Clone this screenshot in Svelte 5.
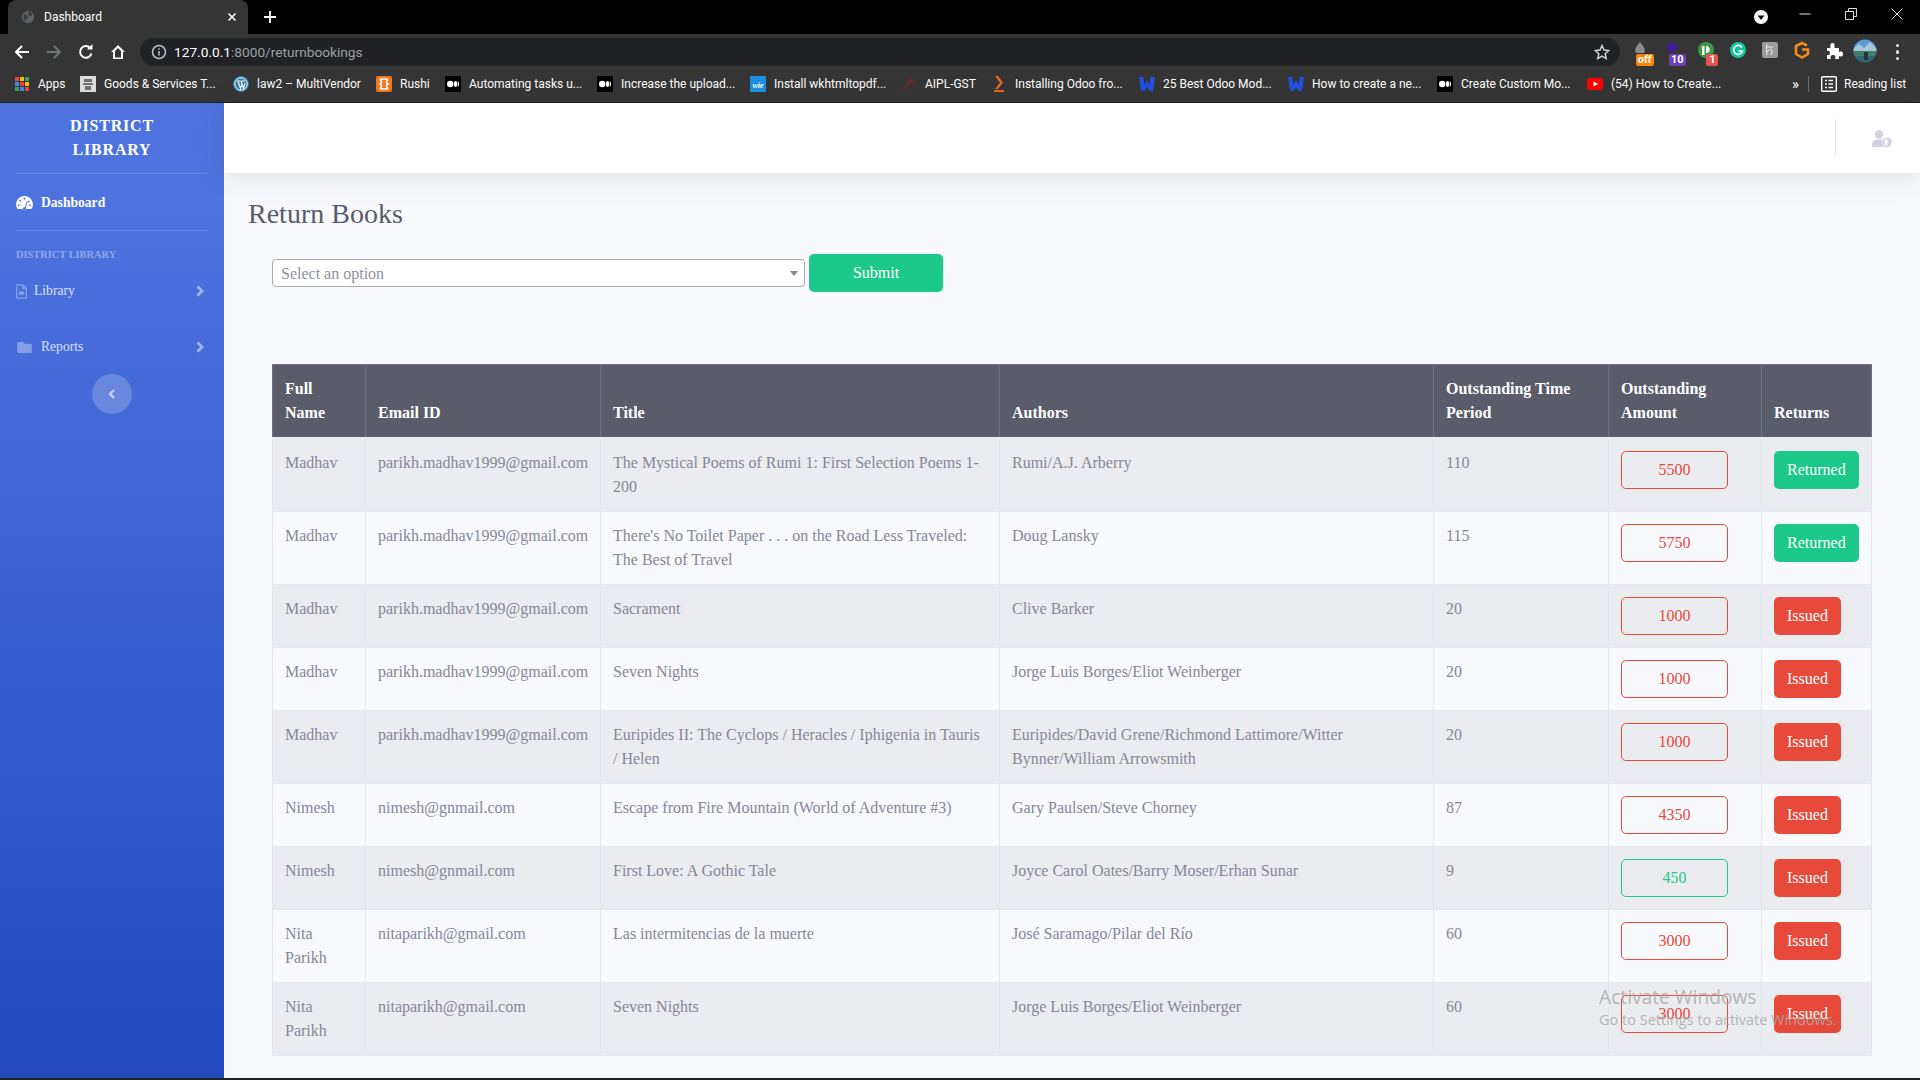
<script>
  const marks = [
    { k: 'apps', t: 'Apps', w: 65 },
    { k: 'gov', t: 'Goods & Services T...', w: 153 },
    { k: 'wp', t: 'law2 – MultiVendor', w: 143 },
    { k: 'xa', t: 'Rushi', w: 69 },
    { k: 'med', t: 'Automating tasks u...', w: 152 },
    { k: 'med', t: 'Increase the upload...', w: 153 },
    { k: 'wie', t: 'Install wkhtmltopdf...', w: 151 },
    { k: 'aipl', t: 'AIPL-GST', w: 90 },
    { k: 'odoo', t: 'Installing Odoo fro...', w: 148 },
    { k: 'w', t: '25 Best Odoo Mod...', w: 149 },
    { k: 'w', t: 'How to create a ne...', w: 149 },
    { k: 'med', t: 'Create Custom Mo...', w: 150 },
    { k: 'yt', t: '(54) How to Create...', w: 206 }
  ];
  const appsColors = ['#ea4335','#fbbc05','#34a853','#4285f4','#ea4335','#fbbc05','#34a853','#4285f4','#ea4335'];
  const m = 'parikh.madhav1999@gmail.com';
  const e2 = 'nimesh@gnmail.com';
  const e3 = 'nitaparikh@gmail.com';
  const rows = [
    ['Madhav', m, 'The Mystical Poems of Rumi 1: First Selection Poems 1-200', 'Rumi/A.J. Arberry', '110', '5500', 'Returned'],
    ['Madhav', m, "There's No Toilet Paper . . . on the Road Less Traveled: The Best of Travel", 'Doug Lansky', '115', '5750', 'Returned'],
    ['Madhav', m, 'Sacrament', 'Clive Barker', '20', '1000', 'Issued'],
    ['Madhav', m, 'Seven Nights', 'Jorge Luis Borges/Eliot Weinberger', '20', '1000', 'Issued'],
    ['Madhav', m, 'Euripides II: The Cyclops / Heracles / Iphigenia in Tauris / Helen', 'Euripides/David Grene/Richmond Lattimore/Witter Bynner/William Arrowsmith', '20', '1000', 'Issued'],
    ['Nimesh', e2, 'Escape from Fire Mountain (World of Adventure #3)', 'Gary Paulsen/Steve Chorney', '87', '4350', 'Issued'],
    ['Nimesh', e2, 'First Love: A Gothic Tale', 'Joyce Carol Oates/Barry Moser/Erhan Sunar', '9', '450', 'Issued', true],
    ['Nita Parikh', e3, 'Las intermitencias de la muerte', 'José Saramago/Pilar del Río', '60', '3000', 'Issued'],
    ['Nita Parikh', e3, 'Seven Nights', 'Jorge Luis Borges/Eliot Weinberger', '60', '3000', 'Issued']
  ];
  const heads = ['Full Name', 'Email ID', 'Title', 'Authors', 'Outstanding Time Period', 'Outstanding Amount', 'Returns'];
</script>

<div class="page">
  <div class="tabstrip">
    <div class="tab">
      <svg class="fav" viewBox="0 0 16 16"><circle cx="8" cy="8" r="7" fill="#5f6368"/><path d="M3 4l4 2 1 3-2 1-1 3-2-4zM9 2l3 1 1 3-3 1-2-2z" fill="#3a3b3d"/></svg>
      <span class="tabtitle">Dashboard</span>
      <svg class="tabx" viewBox="0 0 10 10"><path d="M1.500 1.500l7 7M8.500 1.500l-7 7" stroke="#fff" stroke-width="1.500"/></svg>
    </div>
    <svg class="plus" viewBox="0 0 12 12"><path d="M6 0v12M0 6h12" stroke="#fff" stroke-width="1.800"/></svg>
    <div class="winctl">
      <svg class="dl" viewBox="0 0 14 14"><circle cx="7" cy="7" r="7" fill="#fff"/><path d="M3.500 5.500h7L7 10z" fill="#111"/></svg>
      <svg class="ctl" viewBox="0 0 12 12"><path d="M0.500 6h11" stroke="#ddd" stroke-width="1"/></svg>
      <svg class="ctl" viewBox="0 0 12 12"><path d="M.5 3.500h8v8h-8zM3.500 3.500v-3h8v8h-3" fill="none" stroke="#ddd" stroke-width="1"/></svg>
      <svg class="ctl last" viewBox="0 0 12 12"><path d="M.5.5l11 11M11.500.5l-11 11" stroke="#ddd" stroke-width="1"/></svg>
    </div>
  </div>

  <div class="toolbar">
    <svg class="nav" viewBox="0 0 16 16"><path d="M15 8H2M8 2L2 8l6 6" fill="none" stroke="#fff" stroke-width="2"/></svg>
    <svg class="nav" viewBox="0 0 16 16"><path d="M1 8h13M8 2l6 6-6 6" fill="none" stroke="#74777a" stroke-width="2"/></svg>
    <svg class="nav" viewBox="0 0 16 16"><path d="M13.500 9.500A5.800 5.800 0 1 1 12.200 4" fill="none" stroke="#fff" stroke-width="2"/><path d="M9 5.500h5.500V0z" fill="#fff"/></svg>
    <svg class="nav" viewBox="0 0 16 16"><path d="M8 1L1 8h2v7h10V8h2zM5 13.500V7l3-3 3 3v6.500z" fill="#fff" fill-rule="evenodd"/></svg>
    <div class="omni">
      <svg class="info" viewBox="0 0 16 16"><circle cx="8" cy="8" r="6.500" fill="none" stroke="#bdc1c6" stroke-width="1.500"/><path d="M8 7v4.500M8 4.200v1.500" stroke="#bdc1c6" stroke-width="1.500"/></svg>
      <span class="url"><b>127.0.0.1</b>:8000/returnbookings</span>
      <svg class="star" viewBox="0 0 16 16"><path d="M8 1.500l2 4.500 4.800.5-3.600 3.200 1 4.800L8 12.100l-4.200 2.400 1-4.800L1.200 6.500 6 6z" fill="none" stroke="#d5d7da" stroke-width="1.400"/></svg>
    </div>
    <div class="exts">
      <div class="ext lead">
        <svg viewBox="0 0 20 20"><path d="M10 1c1 3 6 6 6 11 0 2-1 3-2 3H6c-1 0-2-1-2-3 0-5 5-8 6-11z" fill="#8a8c8f"/></svg>
        <span class="badge orange">off</span>
      </div>
      <div class="ext lead">
        <svg viewBox="0 0 20 20"><path d="M10 1l8 7-8 7-8-7z" fill="#3f1d9b"/></svg>
        <span class="badge purple">10</span>
      </div>
      <div class="ext">
        <svg viewBox="0 0 20 20"><circle cx="10" cy="9" r="8" fill="#3a9a45"/><path d="M6 5h2.500v9H6zM10 5c5 0 5 7 0 7z" fill="#fff"/></svg>
        <span class="badge red">1</span>
      </div>
      <div class="ext">
        <svg viewBox="0 0 20 20"><circle cx="10" cy="9" r="8" fill="#15c39a"/><path d="M14 6.500A4.500 4.500 0 1 0 14.500 10H10.500" fill="none" stroke="#fff" stroke-width="1.600"/></svg>
      </div>
      <div class="ext">
        <svg viewBox="0 0 20 20"><rect x="2" y="1" width="16" height="16" rx="2" fill="#9b9b9b"/><path d="M7 3c-1 4 0 8 0 11M7 11c2-4 6-3 5 0l-1 3M7 6h6" fill="none" stroke="#eee" stroke-width="1"/></svg>
      </div>
      <div class="ext">
        <svg viewBox="0 0 20 20"><path d="M15 4.500L10 2 4 5v8l6 3.500 6-3.500V8.500h-6" fill="none" stroke="#f58a1f" stroke-width="2.600"/></svg>
      </div>
      <div class="ext">
        <svg viewBox="0 0 20 20"><path d="M3 7h3.500C6 3 7 2 8.500 2S11 3 10.500 7H15v4c3-1 4 0 4 2s-1 3-4 2v3H11c1-3 0-4-2-4s-3 1-2 4H3v-4c2 .5 3-.5 3-2S5 9.500 3 10z" fill="#fff"/></svg>
      </div>
      <div class="ext">
        <svg class="avatar" viewBox="0 0 24 24"><defs><clipPath id="av"><circle cx="12" cy="12" r="11.500"/></clipPath></defs><g clip-path="url(#av)"><rect width="24" height="10" fill="#5b9bd5"/><path d="M0 10l6-5 5 4 6-6 7 7v4H0z" fill="#a9c6d6"/><rect y="12" width="24" height="5" fill="#3f7f6c"/><rect y="17" width="24" height="7" fill="#2f6670"/><rect x="11" y="13" width="4" height="8" fill="#26343c"/></g></svg>
      </div>
      <div class="ext dots"><i></i><i></i><i></i></div>
    </div>
  </div>

  <div class="bookmarks">
    {#each marks as b}
      <div class="mark" style="width:{b.w}px">
        {#if b.k === 'apps'}
          <span class="appsgrid">{#each appsColors as c}<i style="background:{c}"></i>{/each}</span>
        {:else if b.k === 'gov'}
          <svg class="bi" viewBox="0 0 16 16"><rect width="16" height="16" fill="#dcdcdc"/><path d="M4 3h8v3H4zM3 7h10v2H3zM5 10h6v4H5z" fill="#6f6f6f"/></svg>
        {:else if b.k === 'wp'}
          <svg class="bi" viewBox="0 0 16 16"><circle cx="8" cy="8" r="8" fill="#2f7fa8"/><circle cx="8" cy="8" r="6.200" fill="none" stroke="#fff" stroke-width="1"/><path d="M4 5h3.500M8.500 5H12M5 5l2.500 7.500L9 8M8 5l2.500 7.500L12 7" fill="none" stroke="#fff" stroke-width="1.100"/></svg>
        {:else if b.k === 'xa'}
          <svg class="bi" viewBox="0 0 16 16"><rect width="16" height="16" rx="2" fill="#f5761f"/><path d="M4 3c2 3 2 4 0 5 2 1 2 2 0 5M12 3c-2 3-2 4 0 5-2 1-2 2 0 5M4 3h8M4 13h8" fill="none" stroke="#fff" stroke-width="1.600"/></svg>
        {:else if b.k === 'med'}
          <svg class="bi" viewBox="0 0 16 16"><rect width="16" height="16" rx="1" fill="#000"/><circle cx="5.200" cy="8" r="3.200" fill="#fff"/><ellipse cx="10.600" cy="8" rx="1.600" ry="3" fill="#fff"/><ellipse cx="13.300" cy="8" rx=".6" ry="2.700" fill="#fff"/></svg>
        {:else if b.k === 'wie'}
          <svg class="bi" viewBox="0 0 16 16"><rect width="16" height="16" fill="#1d8fe0"/><text x="8" y="12" text-anchor="middle" class="wie">wie</text></svg>
        {:else if b.k === 'aipl'}
          <svg class="bi" viewBox="0 0 16 16"><path d="M1 16L10 1l5 8-5-3z" fill="#7a2626"/></svg>
        {:else if b.k === 'odoo'}
          <svg class="bi" viewBox="0 0 16 16"><path d="M4 0h3l5 6.500L7 13H4l5-6.500z" fill="#e8641b"/><rect x="3" y="14" width="10" height="2" fill="#e8641b"/></svg>
        {:else if b.k === 'w'}
          <svg class="bi" viewBox="0 0 16 16"><path d="M0 1h4.500l1 8L8 4l2.500 5 1-8H16l-2 14h-3.500L8 11l-2.500 4H2z" fill="#2450e0"/></svg>
        {:else if b.k === 'yt'}
          <svg class="bi" viewBox="0 0 16 16"><rect y="2" width="16" height="12" rx="3" fill="#f00"/><path d="M6.500 5.500L11 8l-4.500 2.500z" fill="#fff"/></svg>
        {/if}
        <span>{b.t}</span>
      </div>
    {/each}
    <span class="more">»</span>
    <span class="sep"></span>
    <svg class="readicon" viewBox="0 0 16 16"><rect x=".7" y=".7" width="14.600" height="14.600" rx="1" fill="none" stroke="#fff" stroke-width="1.400"/><path d="M4 4.500h2M7.500 4.500H12M4 8h2M7.500 8H12M4 11.500h2M7.500 11.500H12" stroke="#fff" stroke-width="1.400"/></svg>
    <span class="reading">Reading list</span>
  </div>

  <div class="shell">
    <aside class="side">
      <div class="brand">DISTRICT<br />LIBRARY</div>
      <hr />
      <div class="navrow active">
        <svg class="ic-dash" viewBox="0 0 576 512"><path fill="#fff" d="M288 32C129 32 0 161 0 320c0 53 14 102 39 145 6 10 17 15 28 15h442c11 0 22-5 28-15 25-43 39-92 39-145C576 161 447 32 288 32zm0 64c18 0 32 14 32 32s-14 32-32 32-32-14-32-32 14-32 32-32zM96 384c-18 0-32-14-32-32s14-32 32-32 32 14 32 32-14 32-32 32zm48-160c-18 0-32-14-32-32s14-32 32-32 32 14 32 32-14 32-32 32zm247 27l-61 185c14 12 22 30 22 48H224c0-40 37-70 76-63l61-185c3-8 12-13 20-10s13 12 10 20zm38 5c-18 0-32-14-32-32s14-32 32-32 32 14 32 32-14 32-32 32zm51 128c-18 0-32-14-32-32s14-32 32-32 32 14 32 32-14 32-32 32z"/></svg>
        <span>Dashboard</span>
      </div>
      <hr class="second" />
      <div class="sidehead">DISTRICT LIBRARY</div>
      <div class="navrow lib">
        <svg class="ic-file" viewBox="0 0 12 16"><path d="M1 .7h6.500L11.300 4.500v10.800H.7z M7.500.7v3.800h3.800" fill="none" stroke="rgba(255,255,255,.35)" stroke-width="1.300"/><rect x="3" y="8" width="6" height="3.500" fill="rgba(255,255,255,.35)"/></svg>
        <span>Library</span>
        <svg class="chev" viewBox="0 0 8 12"><path d="M1.500 1.500L6 6l-4.500 4.500" fill="none" stroke="rgba(255,255,255,.5)" stroke-width="2.800"/></svg>
      </div>
      <div class="navrow rep">
        <svg class="ic-folder" viewBox="0 0 16 12"><path d="M1.500 0h4.500l2 2h6.500A1.500 1.500 0 0 1 16 3.500v7a1.500 1.500 0 0 1-1.500 1.500h-13A1.500 1.500 0 0 1 0 10.500v-9A1.500 1.500 0 0 1 1.500 0z" fill="rgba(255,255,255,.35)"/></svg>
        <span>Reports</span>
        <svg class="chev" viewBox="0 0 8 12"><path d="M1.500 1.500L6 6l-4.500 4.500" fill="none" stroke="rgba(255,255,255,.5)" stroke-width="2.800"/></svg>
      </div>
      <div class="toggle">
        <svg viewBox="0 0 8 12"><path d="M6 2L2 6l4 4" fill="none" stroke="rgba(255,255,255,.6)" stroke-width="2.400"/></svg>
      </div>
    </aside>

    <main class="main">
      <header class="topbar">
        <span class="vline"></span>
        <svg class="usershield" viewBox="0 0 20 18"><circle cx="7" cy="4.500" r="4.200" fill="#d1d3e2"/><path d="M0 17v-2.500C0 11.500 2.500 9.500 5 9.500h4c.6 0 1.200.1 1.700.3V12c0 2 .8 3.700 2.200 5z" fill="#d1d3e2"/><path d="M15.500 7.500l4.300 1.700V12c0 2.800-2 4.700-4.300 5.500-2.300-.8-4.300-2.700-4.300-5.500V9.200z" fill="#d1d3e2"/><path d="M15.500 9.200v6.500c-1.500-.7-2.800-2-2.800-3.700v-1.700z" fill="#fff"/></svg>
      </header>
      <div class="content">
        <h1>Return Books</h1>
        <div class="panel">
          <form class="pick" onsubmit={(e) => e.preventDefault()}>
            <div class="sel"><span>Select an option</span><i></i></div>
            <button class="btn ok submit" type="submit">Submit</button>
          </form>
          <table>
            <thead>
              <tr>{#each heads as h}<th>{h}</th>{/each}</tr>
            </thead>
            <tbody>
              {#each rows as r}
                <tr>
                  <td>{r[0]}</td><td>{r[1]}</td><td>{r[2]}</td><td>{r[3]}</td><td>{r[4]}</td>
                  <td><input class="amt" class:good={r[7]} readonly value={r[5]} /></td>
                  <td><button class="btn" class:ok={r[6] === 'Returned'} class:bad={r[6] === 'Issued'}>{r[6]}</button></td>
                </tr>
              {/each}
            </tbody>
          </table>
        </div>
      </div>
    </main>
  </div>
  <div class="activate"><div class="a1">Activate Windows</div><div class="a2">Go to Settings to activate Windows.</div></div>
</div>

<style>
  :global(body) { margin: 0; background: #f8f9fc; }
  * { box-sizing: border-box; }
  .page { width: 1920px; height: 1080px; overflow: hidden; position: relative; display: flex; flex-direction: column; font-family: "Liberation Serif", "Times New Roman", serif; border-bottom: 2px solid #202124; }

  .tabstrip { height: 34px; flex: none; background: #000; display: flex; align-items: flex-start; padding-left: 8px; font-family: Roboto, sans-serif; }
  .tab { width: 240px; height: 34px; background: #353535; border-radius: 8px 8px 0 0; display: flex; align-items: center; padding: 0 11px 0 13px; }
  .fav { width: 14px; height: 14px; margin-right: 9px; }
  .tabtitle { color: #fff; font-size: 12px; flex: 1; }
  .tabx { width: 10px; height: 10px; }
  .plus { width: 12px; height: 12px; margin: 11px 0 0 16px; }
  .winctl { margin-left: auto; display: flex; align-items: center; height: 34px; padding-right: 17px; }
  .dl { width: 14px; height: 14px; margin-right: 31px; }
  .ctl { width: 12px; height: 12px; margin-right: 34px; margin-top: -6px; }
  .ctl.last { margin-right: 0; }

  .toolbar { height: 32px; flex: none; background: #353535; display: flex; align-items: center; padding: 4px 0 0 14px; }
  .nav { width: 16px; height: 16px; margin-right: 16px; }
  .nav:nth-child(4) { margin-right: 14px; }
  .omni { width: 1480px; height: 28px; border-radius: 14px; background: #202124; display: flex; align-items: center; padding: 0 10px 0 11px; color: #9aa0a6; font-family: Roboto, sans-serif; font-size: 13.7px; }
  .info { width: 16px; height: 16px; margin-right: 7px; }
  .url b { font-weight: 400; color: #fff; }
  .star { width: 16px; height: 16px; margin-left: auto; }
  .exts { display: flex; align-items: center; margin-left: 7px; }
  .ext { width: 31.800px; height: 28px; position: relative; display: flex; align-items: center; justify-content: center; font-family: Roboto, sans-serif; }
  .ext svg { width: 20px; height: 20px; margin-top: -3px; }
  .ext.lead svg { width: 16px; height: 16px; margin: -6px 0 0 -5px; }
  .ext svg.avatar { width: 24px; height: 24px; }
  .badge { position: absolute; right: 5px; bottom: 0; height: 12px; min-width: 12px; padding: 0 2px; border-radius: 2px; color: #fff; font-size: 11px; font-weight: 700; line-height: 12px; text-align: center; }
  .orange { background: #f5870a; min-width: 18px; }
  .purple { background: #6a3fb8; min-width: 16px; }
  .red { background: #e5534b; right: 4px; }
  .dots { flex-direction: column; gap: 3px; }
  .dots i { width: 3.500px; height: 3.500px; border-radius: 50%; background: #e3e4e6; }

  .bookmarks { height: 37px; flex: none; background: #353535; display: flex; align-items: center; padding-left: 15px; color: #fff; font-family: Roboto, sans-serif; font-size: 12px; border-bottom: 1px solid #202124; }
  .mark { display: flex; align-items: center; gap: 8px; white-space: nowrap; flex: none; }
  .bi { width: 16px; height: 16px; flex: none; }
  .wie { fill: #fff; font: italic 700 8px "Liberation Serif", serif; }
  .appsgrid { width: 14px; height: 14px; display: grid; grid-template-columns: repeat(3, 4px); grid-auto-rows: 4px; gap: 1px; margin-right: 1px; }
  .appsgrid i { display: block; }
  .more { margin-left: -1px; font-size: 15px; width: 16px; }
  .sep { width: 1px; height: 16px; background: #6a6a6a; margin-right: 12px; }
  .readicon { width: 16px; height: 16px; margin-right: 7px; }

  .shell { flex: 1; display: flex; min-height: 0; }
  .side { width: 224px; flex: none; background: linear-gradient(180deg, #4e73df 10%, #224abe 100%); padding: 11px 16px 0; color: #fff; }
  .brand { font-weight: 700; font-size: 16px; line-height: 24px; letter-spacing: .8px; text-align: center; }
  hr { border: 0; border-top: 1px solid rgba(255,255,255,.15); margin: 11px 0 0; }
  hr.second { margin-top: 0; }
  .navrow { display: flex; align-items: center; font-size: 13.6px; color: rgba(255,255,255,.8); }
  .navrow.active { height: 56px; padding-top: 1px; color: #fff; font-weight: 700; gap: 8px; }
  .ic-dash { width: 17px; height: 15px; }
  .sidehead { font-size: 10.4px; font-weight: 700; color: rgba(255,255,255,.4); margin-top: 18px; line-height: 12px; }
  .lib { height: 56px; margin-top: 2px; }
  .ic-file { width: 11px; height: 15px; margin-right: 7px; }
  .rep { height: 56px; }
  .ic-folder { width: 15px; height: 11px; margin: 0 9px 0 1px; }
  .chev { width: 8px; height: 12px; margin-left: auto; margin-right: 4px; }
  .toggle { width: 40px; height: 40px; border-radius: 50%; background: rgba(255,255,255,.2); margin: -1px auto 0; display: flex; align-items: center; justify-content: center; }
  .toggle svg { width: 8px; height: 12px; }

  .main { flex: 1; min-width: 0; background: #f8f9fc; }
  .topbar { height: 70px; background: #fff; box-shadow: 0 .15rem 1.75rem 0 rgba(58,59,69,.15); display: flex; align-items: center; justify-content: flex-end; position: relative; }
  .vline { width: 1px; height: 38px; background: #e3e6f0; margin-right: 36px; }
  .usershield { width: 20px; height: 18px; margin: 2px 28px 0 0; }
  .content { padding: 0 24px; }
  h1 { font-size: 28px; font-weight: 400; line-height: 33px; color: #5a5c69; margin: 24px 0 0; }
  .panel { padding: 0 24px; }
  .pick { display: flex; align-items: center; gap: 4px; margin-top: 24px; }
  .sel { width: 533px; height: 28px; background: #fff; border: 1px solid #aaa; border-radius: 4px; display: flex; align-items: center; justify-content: space-between; padding: 0 6px 0 8px; font-size: 16px; color: #8f919c; }
  .sel span { margin-top: 1px; }
  .sel i { border: 4px solid transparent; border-top: 5px solid #888; border-bottom: 0; }
  .btn { display: block; height: 38px; border: 1px solid transparent; border-radius: 5px; padding: 0 12px; font: 16px/24px "Liberation Serif", "Times New Roman", serif; color: #fff; }
  .ok { background: #1cc88a; }
  .bad { background: #e74a3b; }
  .submit { width: 134px; }

  table { width: 1599px; margin-top: 72px; border-collapse: collapse; table-layout: fixed; font-size: 16px; line-height: 24px; color: #858796; }
  th { background: #5a5c69; color: #fff; font-weight: 700; text-align: left; vertical-align: bottom; padding: 12px; border: 1px solid #6e707c; border-bottom-color: #ebecef; }
  td { vertical-align: top; padding: 12px; border: 1px solid #e3e6f0; }
  tbody tr:first-child td { padding-top: 13px; border-top-color: #ebecef; }
  tbody tr:nth-child(odd) td { background: #ebecef; }
  th:nth-child(1) { width: 93px; }
  th:nth-child(2) { width: 235px; }
  th:nth-child(3) { width: 399px; }
  th:nth-child(4) { width: 434px; }
  th:nth-child(5) { width: 175px; }
  th:nth-child(6) { width: 153px; }
  th:nth-child(7) { width: 110px; }
  .amt { display: block; width: 107px; height: 38px; border: 1px solid #e74a3b; border-radius: 5px; background: transparent; text-align: center; font: 16px/24px "Liberation Serif", "Times New Roman", serif; color: #e74a3b; padding: 0; outline: 0; }
  .amt.good { border-color: #1cc88a; color: #1cc88a; }

  .activate { position: absolute; left: 1599px; top: 983px; z-index: 5; font-family: "Open Sans", sans-serif; color: rgba(170,170,170,.85); pointer-events: none; white-space: nowrap; }
  .a1 { font-size: 19.200px; line-height: 27px; font-weight: 400; }
  .a2 { font-size: 14.500px; line-height: 19px; }
</style>
